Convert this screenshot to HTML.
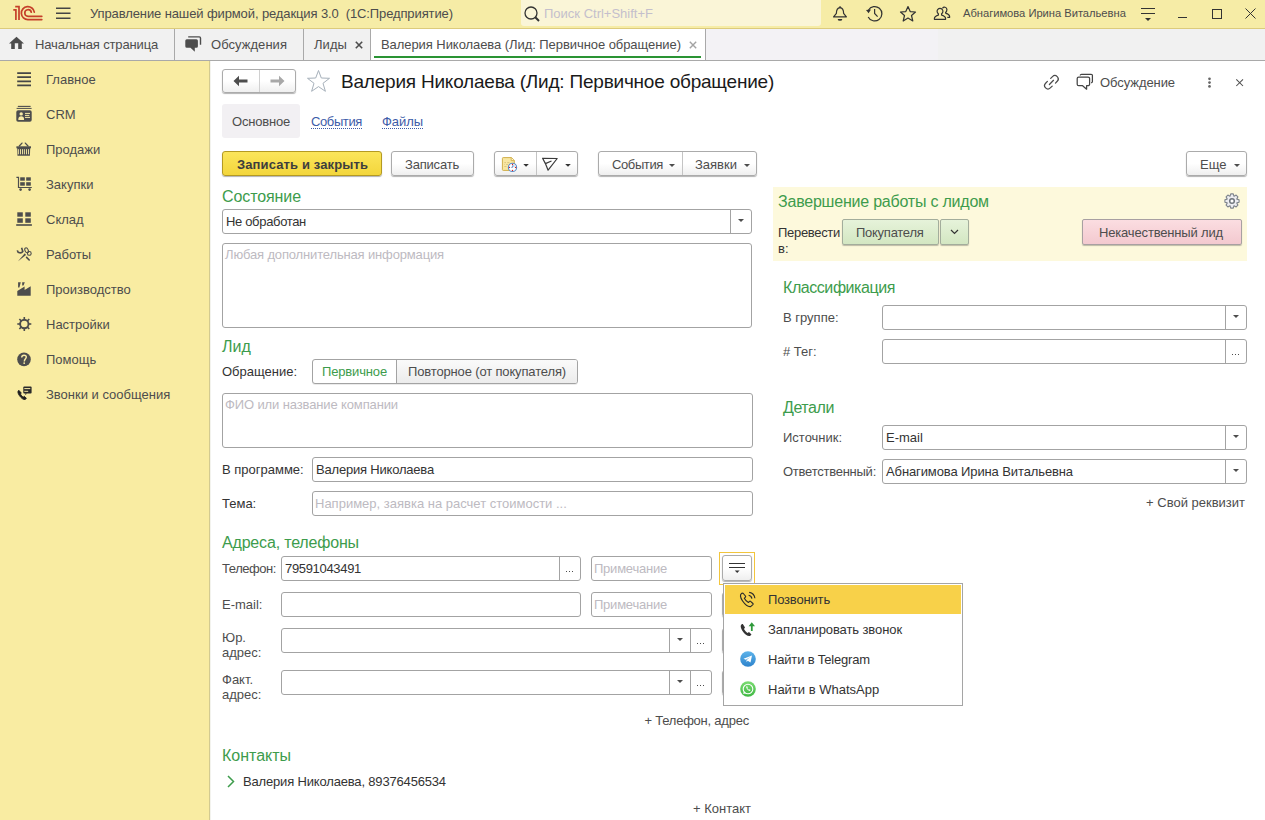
<!DOCTYPE html>
<html><head><meta charset="utf-8">
<style>
*{box-sizing:border-box}
html,body{margin:0;padding:0}
body{width:1265px;height:820px;overflow:hidden;position:relative;background:#fff;font-family:"Liberation Sans",sans-serif;font-size:13px;color:#4d4d4d}
.a{position:absolute}
.t{position:absolute;white-space:nowrap}
svg{position:absolute;overflow:visible}
.btn{position:absolute;border:1px solid #ababab;border-radius:3px;background:linear-gradient(#fff 0%,#fff 50%,#efefef 100%);box-shadow:0 1px 1px rgba(0,0,0,.3)}
.fld{position:absolute;border:1px solid #a3a3a3;border-radius:3px;background:#fff}
.dd{position:absolute;top:0;right:0;bottom:0;width:21px;border-left:1px solid #a3a3a3}
.dd:after{content:"";position:absolute;left:7px;top:50%;margin-top:-3px;border-left:3px solid transparent;border-right:3px solid transparent;border-top:3px solid #4d4d4d}
.el{position:absolute;top:0;right:0;bottom:0;width:21px;border-left:1px solid #a3a3a3}
.el:after{content:"";position:absolute;left:6px;top:50%;margin-top:2px;width:1px;height:1px;background:#4d4d4d;box-shadow:3px 0 #4d4d4d,6px 0 #4d4d4d}
.tri{position:absolute;width:0;height:0;border-left:3px solid transparent;border-right:3px solid transparent;border-top:3px solid #4d4d4d}
</style></head><body>

<div class="a" style="left:0px;top:0px;width:1265px;height:28px;background:#f6eca6;"></div>
<div class="a" style="left:0px;top:28px;width:1265px;height:1px;background:#dccb7c;"></div>
<svg style="left:10px;top:2px;" width="36" height="24" viewBox="0 0 36 24"><g fill="none" stroke="#c5402a" stroke-width="1.7"><path d="M3.3 7.9 H5.9 V17.9 M5.2 4.6 H9 V17.9"/><path d="M24.3 10.2 A6.5 6.5 0 1 0 18 17.6 H31.8" stroke-linecap="round"/><path d="M21.3 10.2 A3.3 3.3 0 1 0 18.1 14.3 H31.8" stroke-linecap="round"/></g></svg>
<svg style="left:56px;top:7px;" width="15" height="13" viewBox="0 0 15 13"><path d="M0 1.3 H14.5 M0 6.3 H14.5 M0 11.3 H14.5" stroke="#444" stroke-width="1.4"/></svg>
<div class="t" style="left:90px;top:4px;font-size:13px;line-height:20px;height:20px;letter-spacing:-0.111px;color:#4d4d4d;">Управление нашей фирмой, редакция 3.0&nbsp; (1С:Предприятие)</div>
<div class="a" style="left:521px;top:0px;width:300px;height:26px;background:#faf5d7;border-radius:0 0 3px 3px"></div>
<svg style="left:523px;top:5px;" width="18" height="18" viewBox="0 0 18 18"><circle cx="8" cy="8" r="6" fill="none" stroke="#333" stroke-width="1.3"/><path d="M12.3 12.3 L16 16" stroke="#333" stroke-width="2"/></svg>
<div class="t" style="left:544px;top:4px;font-size:13px;line-height:20px;height:20px;color:#c4bfcc;">Поиск Ctrl+Shift+F</div>
<svg style="left:0;top:0" width="1265" height="820" viewBox="0 0 1265 820"><path d="M836.4 13.3 C836.4 10.2 836.8 8 840 7.7 C843.2 8 843.6 10.2 843.6 13.3 L846.4 16.9 H833.6 Z" fill="none" stroke="#333" stroke-width="1.2" stroke-linejoin="round"/><rect x="839.4" y="6.2" width="1.3" height="1.6" fill="#333"/><path d="M837.7 18.9 H842.3 A2.3 1.9 0 0 1 837.7 18.9 Z" fill="#333"/></svg>
<svg style="left:0;top:0" width="1265" height="820" viewBox="0 0 1265 820"><path d="M868.4 10.2 A7.2 7.2 0 1 1 868.2 16.9" fill="none" stroke="#333" stroke-width="1.25"/><path d="M866 10.1 L871 9.5 L868.6 13.3 Z" fill="#333"/><path d="M874.6 9.1 V13.4 L877.6 16.6" fill="none" stroke="#333" stroke-width="1.2"/></svg>
<svg style="left:899px;top:5px;" width="18" height="18" viewBox="0 0 18 18"><path d="M9 1.5 L11.2 6.6 L16.5 7 L12.5 10.5 L13.8 16 L9 13.1 L4.2 16 L5.5 10.5 L1.5 7 L6.8 6.6 Z" fill="none" stroke="#333" stroke-width="1.2" stroke-linejoin="round"/></svg>
<svg style="left:0;top:0" width="1265" height="820" viewBox="0 0 1265 820"><path d="M938.4 13.7 A2.9 2.9 0 1 1 941.6 13.7 V15.1 C944 15.9 945.6 16.5 945.6 18.4 V19.3 H934.4 V18.4 C934.4 16.5 936 15.9 938.4 15.1 Z" fill="none" stroke="#333" stroke-width="1.2" stroke-linejoin="round"/><path d="M942.5 8.3 A2.4 2.4 0 0 1 946.9 9.4 C946.9 10.6 946.5 11.6 945.6 12.5 V13.1 C948 13.9 949.6 14.5 949.6 16.3 V17.4 H947.3" fill="none" stroke="#333" stroke-width="1.2" stroke-linejoin="round"/></svg>
<div class="t" style="left:963px;top:3px;font-size:11.2px;line-height:20px;height:20px;letter-spacing:-0.026px;color:#4d4d4d;">Абнагимова Ирина Витальевна</div>
<div class="a" style="left:1141px;top:8px;width:14px;height:1px;background:#333"></div>
<div class="a" style="left:1141px;top:13px;width:14px;height:1px;background:#333"></div>
<div class="tri" style="left:1145px;top:18px;border-left-width:3px;border-right-width:3px;border-top:3px solid #333"></div>
<div class="a" style="left:1178px;top:17px;width:9px;height:1px;background:#333;"></div>
<div class="a" style="left:1212px;top:9px;width:10px;height:10px;border:1px solid #333"></div>
<svg style="left:1245px;top:8px;" width="11" height="11" viewBox="0 0 11 11"><path d="M0.5 0.5 L10.5 10.5 M10.5 0.5 L0.5 10.5" stroke="#333" stroke-width="1"/></svg>
<div class="a" style="left:0px;top:29px;width:1265px;height:31px;background:#f1f1f1;"></div>
<div class="a" style="left:0px;top:60px;width:1265px;height:1px;background:#a9a9a9;"></div>
<div class="a" style="left:705px;top:29px;width:233px;height:31px;background:#f3f2f5;"></div>
<div class="a" style="left:371px;top:29px;width:334px;height:31px;background:#ffffff;"></div>
<div class="a" style="left:174px;top:29px;width:1px;height:31px;background:#a9a9a9;"></div>
<div class="a" style="left:303px;top:29px;width:1px;height:31px;background:#a9a9a9;"></div>
<div class="a" style="left:370px;top:29px;width:1px;height:31px;background:#a9a9a9;"></div>
<div class="a" style="left:705px;top:29px;width:1px;height:31px;background:#a9a9a9;"></div>
<div class="a" style="left:374px;top:56px;width:327px;height:2px;background:#2a9434;"></div>
<svg style="left:0;top:0" width="1265" height="820" viewBox="0 0 1265 820"><path d="M16.5 36.8 L24 43.6 H21.8 V48.9 H18.2 V43.2 H14.8 V48.9 H11.2 V43.6 H9 Z" fill="#4d4d4d"/></svg>
<div class="t" style="left:35px;top:35px;font-size:13px;line-height:20px;height:20px;letter-spacing:-0.155px;color:#4d4d4d;">Начальная страница</div>
<svg style="left:180px;top:30px;" width="28" height="28" viewBox="0 0 28 28"><path d="M8.2 6.9 H19.3 A1.2 1.2 0 0 1 20.5 8.1 V14.8" fill="none" stroke="#4d4d4d" stroke-width="1.4"/><path d="M6.8 9.2 H16.4 A1.5 1.5 0 0 1 17.9 10.7 V16.3 A1.5 1.5 0 0 1 16.4 17.8 H14.8 V21.7 L10.5 17.8 H6.8 A1.5 1.5 0 0 1 5.3 16.3 V10.7 A1.5 1.5 0 0 1 6.8 9.2 Z" fill="#4d4d4d"/></svg>
<div class="t" style="left:211px;top:35px;font-size:13px;line-height:20px;height:20px;letter-spacing:0.044px;color:#4d4d4d;">Обсуждения</div>
<div class="t" style="left:314px;top:35px;font-size:13px;line-height:20px;height:20px;letter-spacing:0.070px;color:#4d4d4d;">Лиды</div>
<svg style="left:355px;top:41px;" width="8" height="8" viewBox="0 0 8 8"><path d="M0.8 0.8 L7.2 7.2 M7.2 0.8 L0.8 7.2" stroke="#4d4d4d" stroke-width="1.6"/></svg>
<div class="t" style="left:381px;top:35px;font-size:13px;line-height:20px;height:20px;letter-spacing:-0.065px;color:#4d4d4d;">Валерия Николаева (Лид: Первичное обращение)</div>
<svg style="left:689px;top:41px;" width="8" height="8" viewBox="0 0 8 8"><path d="M0.8 0.8 L7.2 7.2 M7.2 0.8 L0.8 7.2" stroke="#a3a3a3" stroke-width="1.4"/></svg>
<div class="a" style="left:0px;top:61px;width:210px;height:759px;background:#f9eca2;"></div>
<div class="a" style="left:209px;top:61px;width:1px;height:759px;background:#d3ca90;"></div>
<div class="a" style="left:210px;top:61px;width:1px;height:759px;background:#f3f3ee;"></div>
<div class="t" style="left:46px;top:70px;font-size:13px;line-height:20px;height:20px;color:#4d4d4d;">Главное</div>
<div class="t" style="left:46px;top:105px;font-size:13px;line-height:20px;height:20px;color:#4d4d4d;">CRM</div>
<div class="t" style="left:46px;top:140px;font-size:13px;line-height:20px;height:20px;color:#4d4d4d;">Продажи</div>
<div class="t" style="left:46px;top:175px;font-size:13px;line-height:20px;height:20px;color:#4d4d4d;">Закупки</div>
<div class="t" style="left:46px;top:210px;font-size:13px;line-height:20px;height:20px;color:#4d4d4d;">Склад</div>
<div class="t" style="left:46px;top:245px;font-size:13px;line-height:20px;height:20px;color:#4d4d4d;">Работы</div>
<div class="t" style="left:46px;top:280px;font-size:13px;line-height:20px;height:20px;color:#4d4d4d;">Производство</div>
<div class="t" style="left:46px;top:315px;font-size:13px;line-height:20px;height:20px;color:#4d4d4d;">Настройки</div>
<div class="t" style="left:46px;top:350px;font-size:13px;line-height:20px;height:20px;color:#4d4d4d;">Помощь</div>
<div class="t" style="left:46px;top:385px;font-size:13px;line-height:20px;height:20px;color:#4d4d4d;">Звонки и сообщения</div>
<svg style="left:0;top:0" width="1265" height="820" viewBox="0 0 1265 820"><path d="M17.2 73.1 H31 M17.2 77.2 H31 M17.2 81.3 H31 M17.2 85.4 H31" stroke="#464646" stroke-width="1.7"/><path d="M17.8 106.4 H30.6" stroke="#4d4d4d" stroke-width="1.1"/><path d="M16.6 108.4 H31.6" stroke="#4d4d4d" stroke-width="1"/><rect x="16.3" y="110.2" width="15.4" height="11.6" rx="1.8" fill="#4d4d4d"/><circle cx="21.2" cy="113.9" r="1.7" fill="#f9eca6"/><path d="M18.3 119.9 C18.3 117 19.5 116.3 21.2 116.3 C22.9 116.3 24.1 117 24.1 119.9 Z" fill="#f9eca6"/><path d="M25 113.4 H30 M25 115.4 H29.3 M25 117.4 H30" stroke="#f9eca6" stroke-width="1"/><path d="M19.3 146 L22 143.1 M25.3 143.1 L28 146" stroke="#4d4d4d" stroke-width="1.3" stroke-linecap="round"/><rect x="16.4" y="146.3" width="14.6" height="2" fill="#4d4d4d"/><path d="M17.2 148 H30.2 L29.9 155.7 H17.5 Z" fill="#4d4d4d"/><path d="M18.4 149.2 V154.3 M20.5 149.2 V154.3 M22.5 149.2 V154.3 M24.4 149.2 V154.3 M26.5 149.2 V154.3 M28.5 149.2 V154.3" stroke="#f9eca6" stroke-width="0.9"/><path d="M16.4 177.3 H18.5 V187.5 H31.8" fill="none" stroke="#4d4d4d" stroke-width="1.2"/><rect x="20.2" y="177.3" width="4.6" height="3.4" fill="#4d4d4d"/><rect x="26.2" y="177.3" width="4.6" height="3.4" fill="#4d4d4d"/><rect x="20.2" y="182.2" width="4.6" height="3.5" fill="#4d4d4d"/><rect x="26.2" y="182.2" width="4.6" height="3.5" fill="#4d4d4d"/><circle cx="20.6" cy="189.6" r="1.3" fill="#4d4d4d"/><circle cx="29.6" cy="189.6" r="1.3" fill="#4d4d4d"/><rect x="17.3" y="212.3" width="5.5" height="4.4" fill="#4d4d4d"/><rect x="25.3" y="212.3" width="5.5" height="4.4" fill="#4d4d4d"/><rect x="17.3" y="218.3" width="5.5" height="4.5" fill="#4d4d4d"/><rect x="25.3" y="218.3" width="5.5" height="4.5" fill="#4d4d4d"/><rect x="16.2" y="224.2" width="15.7" height="1.6" fill="#4d4d4d"/><path d="M17.3 250.3 A3 3 0 0 0 22.8 251.5 L21.6 247.8" fill="none" stroke="#4d4d4d" stroke-width="1.6"/><path d="M18 261.3 L24.8 253.3 L26 255 Z" fill="#4d4d4d"/><ellipse cx="26.6" cy="250.3" rx="1.6" ry="2.6" fill="none" stroke="#4d4d4d" stroke-width="1.1" transform="rotate(-25 26.6 250.3)"/><circle cx="29.3" cy="253.4" r="1.9" fill="none" stroke="#4d4d4d" stroke-width="1.1"/><path d="M26.6 257.4 L29.2 260" stroke="#4d4d4d" stroke-width="1.6" stroke-linecap="round"/><path d="M17.3 295.7 V291.1 L24.6 286.6 V290 L30.7 286.2 V295.7 Z" fill="#4d4d4d"/><path d="M18.1 282.3 H20.8 L19.4 287.5 H18.1 Z M22.2 282.3 H24.8 L23.5 285.5 H22.2 Z" fill="#4d4d4d"/><g transform="translate(24.3 324)"><circle r="4.2" fill="none" stroke="#4d4d4d" stroke-width="1.9"/><rect x="-0.8" y="-7" width="1.6" height="3.2" fill="#4d4d4d" transform="rotate(0)"/><rect x="-0.8" y="-7" width="1.6" height="3.2" fill="#4d4d4d" transform="rotate(45)"/><rect x="-0.8" y="-7" width="1.6" height="3.2" fill="#4d4d4d" transform="rotate(90)"/><rect x="-0.8" y="-7" width="1.6" height="3.2" fill="#4d4d4d" transform="rotate(135)"/><rect x="-0.8" y="-7" width="1.6" height="3.2" fill="#4d4d4d" transform="rotate(180)"/><rect x="-0.8" y="-7" width="1.6" height="3.2" fill="#4d4d4d" transform="rotate(225)"/><rect x="-0.8" y="-7" width="1.6" height="3.2" fill="#4d4d4d" transform="rotate(270)"/><rect x="-0.8" y="-7" width="1.6" height="3.2" fill="#4d4d4d" transform="rotate(315)"/></g><circle cx="24" cy="359.4" r="6.8" fill="#4d4d4d"/><path d="M21.7 357.4 C21.7 355.9 22.6 355.2 24 355.2 C25.5 355.2 26.3 356.1 26.3 357.1 C26.3 358.6 24.3 359 24.3 361.4" fill="none" stroke="#f9eca6" stroke-width="1.4"/><rect x="23.4" y="362.4" width="1.6" height="1.5" fill="#f9eca6"/><path d="M18.8 390.3 C17.5 391 17.6 393 19.4 395.6 C21.2 398.2 23.3 399.8 25 399.5 L26.4 398.4 L24.4 396.3 L23.3 397.1 C22.4 396.6 20.9 395 20.4 394 L21.3 393 Z" fill="#1f1f1f" stroke="#1f1f1f" stroke-width="0.9" stroke-linejoin="round"/><rect x="23.3" y="386.6" width="8.3" height="6.9" rx="1" fill="#2a2a2a"/><path d="M25 393.4 L25.5 395 L27 393.4 Z" fill="#2a2a2a"/><path d="M24.3 388.6 H30.3 M24.3 391.3 H28.2" stroke="#f9eca6" stroke-width="1"/></svg>
<div class="btn" style="left:222px;top:69px;width:74px;height:24px"></div>
<div class="a" style="left:259px;top:70px;width:1px;height:22px;background:#d0d0d0;"></div>
<svg style="left:233px;top:75px;" width="16" height="12" viewBox="0 0 16 12"><path d="M0.5 6 L6 0.8 V4.5 H14.5 V7.5 H6 V11.2 Z" fill="#4d4d4d"/></svg>
<svg style="left:269px;top:75px;" width="16" height="12" viewBox="0 0 16 12"><path d="M15.5 6 L10 0.8 V4.5 H1.5 V7.5 H10 V11.2 Z" fill="#a8a8a8"/></svg>
<svg style="left:306px;top:69px;" width="25" height="24" viewBox="0 0 25 24"><path d="M12.5 1.5 L15.3 9 L23.5 9.3 L17 14.3 L19.4 22.3 L12.5 17.6 L5.6 22.3 L8 14.3 L1.5 9.3 L9.7 9 Z" fill="none" stroke="#a6b0ba" stroke-width="1"/></svg>
<div class="t" style="left:341px;top:72px;font-size:19px;line-height:20px;height:20px;letter-spacing:-0.215px;color:#1a1a1a;">Валерия Николаева (Лид: Первичное обращение)</div>
<svg style="left:0;top:0" width="1265" height="820" viewBox="0 0 1265 820"><path d="M1050.7 78.4 L1052.5 76.6 A3.32 3.32 0 0 1 1057.2 81.3 L1055.5 83.1 M1047.4 81.4 L1045.6 83.2 A3.32 3.32 0 0 0 1050.3 87.9 L1052.2 86.1 M1049.4 84.5 L1053.5 80.3" fill="none" stroke="#4a4a4a" stroke-width="1.25" stroke-linecap="round"/></svg>
<svg style="left:0;top:0" width="1265" height="820" viewBox="0 0 1265 820"><path d="M1078.7 77.1 H1088.1 A1.5 1.5 0 0 1 1089.6 78.6 V84.2 A1.5 1.5 0 0 1 1088.1 85.7 H1086.6 V89.2 L1082.6 85.7 H1078.7 A1.5 1.5 0 0 1 1077.2 84.2 V78.6 A1.5 1.5 0 0 1 1078.7 77.1 Z M1080.3 75.6 A1.3 1.3 0 0 1 1081.6 74.3 H1091.1 A1.3 1.3 0 0 1 1092.4 75.6 V81.4 A1.3 1.3 0 0 1 1091.1 82.7" fill="none" stroke="#444" stroke-width="1.25" stroke-linejoin="round"/></svg>
<div class="t" style="left:1100px;top:73px;font-size:13px;line-height:20px;height:20px;letter-spacing:-0.075px;color:#4d4d4d;">Обсуждение</div>
<svg style="left:0;top:0" width="1265" height="820" viewBox="0 0 1265 820"><circle cx="1209.5" cy="78.8" r="1.35" fill="#666"/><circle cx="1209.5" cy="82.6" r="1.35" fill="#666"/><circle cx="1209.5" cy="86.4" r="1.35" fill="#666"/></svg>
<svg style="left:0;top:0" width="1265" height="820" viewBox="0 0 1265 820"><path d="M1236.3 79.3 L1243 86 M1243 79.3 L1236.3 86" stroke="#4d4d4d" stroke-width="1.05"/></svg>
<div class="a" style="left:222px;top:104px;width:78px;height:34px;background:#f2f0f3;border-radius:3px"></div>
<div class="t" style="left:232px;top:112px;font-size:13px;line-height:20px;height:20px;letter-spacing:-0.195px;color:#4d4d4d;">Основное</div>
<div class="t" style="left:311px;top:112px;font-size:13px;line-height:20px;height:20px;letter-spacing:-0.384px;color:#3c5ba8;">События</div>
<div class="a" style="left:311px;top:128px;width:51px;height:0;border-top:1px dotted #3c5ba8"></div>
<div class="t" style="left:382px;top:112px;font-size:13px;line-height:20px;height:20px;letter-spacing:-0.062px;color:#3c5ba8;">Файлы</div>
<div class="a" style="left:382px;top:128px;width:41px;height:0;border-top:1px dotted #3c5ba8"></div>
<div class="a" style="left:222px;top:151px;width:160px;height:25px;border:1px solid #b49a22;border-radius:3px;background:linear-gradient(#fbe55a,#f3d63c);box-shadow:0 1px 1px rgba(0,0,0,.3)"></div>
<div class="t" style="left:237px;top:155px;font-size:13px;line-height:20px;height:20px;letter-spacing:0.122px;color:#3d3d3d;font-weight:bold;">Записать и закрыть</div>
<div class="btn" style="left:391px;top:151px;width:83px;height:25px"></div>
<div class="t" style="left:405px;top:155px;font-size:13px;line-height:20px;height:20px;letter-spacing:-0.197px;color:#4d4d4d;">Записать</div>
<div class="btn" style="left:494px;top:151px;width:84px;height:25px"></div>
<div class="a" style="left:536px;top:152px;width:1px;height:23px;background:#c4c4c4;"></div>
<svg style="left:498px;top:153px;" width="36" height="24" viewBox="0 0 36 24"><path d="M5.2 4.6 H13.6 L16.3 7.4 V16.6 A0.8 0.8 0 0 1 15.5 17.4 H5.2 A0.8 0.8 0 0 1 4.4 16.6 V5.4 A0.8 0.8 0 0 1 5.2 4.6 Z" fill="#f8e7a2" stroke="#d1af4c" stroke-width="1"/><path d="M13.2 4.8 V7.6 H16.2" fill="#fff6cf" stroke="#d1af4c" stroke-width="0.9"/><path d="M6.3 9.6 H8 M9.2 9.6 H11.5 M6.3 11.5 H6.9 M8.2 11.5 H10 M6.3 13.5 H8.5" stroke="#d9c27a" stroke-width="0.9"/><circle cx="14.5" cy="14.4" r="4.1" fill="#fff" stroke="#5a8ac6" stroke-width="1.1"/><path d="M14.5 11.6 A2.8 2.8 0 0 1 17.1 13.2 L14.5 14.4 Z" fill="#b8cdea"/><path d="M14.5 12.5 V14.4 H13.2" fill="none" stroke="#5a8ac6" stroke-width="0.8"/><circle cx="14.5" cy="11.5" r="0.65" fill="#e0201a"/><circle cx="17.5" cy="14.4" r="0.65" fill="#e0201a"/><circle cx="14.5" cy="17.4" r="0.65" fill="#e0201a"/><circle cx="11.5" cy="14.4" r="0.65" fill="#e0201a"/></svg>
<svg style="left:0;top:0" width="1265" height="820" viewBox="0 0 1265 820"><path d="M523.3 164 H528.8 L526.05 166.8 Z" fill="#333"/><path d="M565.2 164 H570.8 L568 166.8 Z" fill="#333"/></svg>
<svg style="left:536px;top:153px;" width="42" height="24" viewBox="0 0 42 24"><path d="M6.6 5.3 L21.2 5.5 L12.1 17.2 L9.4 10.6 Z M9.4 10.6 L15.5 8" fill="none" stroke="#3a3a3a" stroke-width="1.2" stroke-linejoin="round"/></svg>
<div class="btn" style="left:598px;top:151px;width:159px;height:25px"></div>
<div class="a" style="left:682px;top:152px;width:1px;height:23px;background:#c4c4c4;"></div>
<div class="t" style="left:612px;top:155px;font-size:13px;line-height:20px;height:20px;letter-spacing:-0.384px;color:#4d4d4d;">События</div>
<div class="tri" style="left:669px;top:164px"></div>
<div class="t" style="left:695px;top:155px;font-size:13px;line-height:20px;height:20px;letter-spacing:0.000px;color:#4d4d4d;">Заявки</div>
<div class="tri" style="left:744px;top:164px"></div>
<div class="btn" style="left:1186px;top:151px;width:61px;height:25px"></div>
<div class="t" style="left:1200px;top:155px;font-size:13px;line-height:20px;height:20px;color:#4d4d4d;">Еще</div>
<div class="tri" style="left:1234px;top:164px"></div>
<div class="t" style="left:222px;top:187px;font-size:16px;line-height:20px;height:20px;letter-spacing:-0.099px;color:#3d9c4c;">Состояние</div>
<div class="fld" style="left:222px;top:209px;width:530px;height:25px"><div class="dd"></div></div>
<div class="t" style="left:226px;top:212px;font-size:13px;line-height:20px;height:20px;letter-spacing:-0.335px;color:#333;">Не обработан</div>
<div class="fld" style="left:222px;top:243px;width:530px;height:85px"></div>
<div class="t" style="left:225px;top:245px;font-size:13px;line-height:20px;height:20px;letter-spacing:-0.152px;color:#bdbac1;">Любая дополнительная информация</div>
<div class="t" style="left:222px;top:337px;font-size:16px;line-height:20px;height:20px;color:#3d9c4c;">Лид</div>
<div class="t" style="left:222px;top:362px;font-size:13px;line-height:20px;height:20px;color:#333;">Обращение:</div>
<div class="a" style="left:312px;top:359px;width:266px;height:25px;border:1px solid #a3a3a3;border-radius:3px;background:#fff;overflow:hidden;box-shadow:0 1px 0 rgba(0,0,0,.08)"><div class="a" style="left:83px;top:0;width:183px;height:23px;border-left:1px solid #a3a3a3;background:linear-gradient(#fafafa,#ececec)"></div></div>
<div class="t" style="left:322px;top:362px;font-size:13px;line-height:20px;height:20px;letter-spacing:-0.155px;color:#3d9c4c;">Первичное</div>
<div class="t" style="left:408px;top:362px;font-size:13px;line-height:20px;height:20px;letter-spacing:-0.150px;color:#4d4d4d;">Повторное (от покупателя)</div>
<div class="fld" style="left:222px;top:393px;width:531px;height:55px"></div>
<div class="t" style="left:225px;top:395px;font-size:13px;line-height:20px;height:20px;letter-spacing:-0.126px;color:#bdbac1;">ФИО или название компании</div>
<div class="t" style="left:222px;top:460px;font-size:13px;line-height:20px;height:20px;color:#333;">В программе:</div>
<div class="fld" style="left:312px;top:457px;width:441px;height:25px"></div>
<div class="t" style="left:316px;top:460px;font-size:13px;line-height:20px;height:20px;letter-spacing:-0.198px;color:#333;">Валерия Николаева</div>
<div class="t" style="left:222px;top:494px;font-size:13px;line-height:20px;height:20px;color:#333;">Тема:</div>
<div class="fld" style="left:312px;top:491px;width:441px;height:25px"></div>
<div class="t" style="left:315px;top:494px;font-size:13px;line-height:20px;height:20px;color:#bdbac1;">Например, заявка на расчет стоимости ...</div>
<div class="t" style="left:222px;top:533px;font-size:16px;line-height:20px;height:20px;letter-spacing:-0.178px;color:#3d9c4c;">Адреса, телефоны</div>
<div class="t" style="left:222px;top:559px;font-size:13px;line-height:20px;height:20px;letter-spacing:-0.441px;color:#4d4d4d;">Телефон:</div>
<div class="fld" style="left:281px;top:556px;width:300px;height:25px"><div class="el"></div></div>
<div class="t" style="left:285px;top:559px;font-size:13px;line-height:20px;height:20px;letter-spacing:-0.325px;color:#333;">79591043491</div>
<div class="fld" style="left:591px;top:556px;width:121px;height:25px"></div>
<div class="t" style="left:594px;top:559px;font-size:13px;line-height:20px;height:20px;letter-spacing:-0.225px;color:#bdbac1;">Примечание</div>
<div class="a" style="left:719px;top:552px;width:36px;height:33px;border:1px solid #f2c53d"></div>
<div class="btn" style="left:722px;top:555px;width:30px;height:26px"></div>
<div class="a" style="left:729px;top:563px;width:16px;height:1px;background:#333;"></div>
<div class="a" style="left:729px;top:567px;width:16px;height:1px;background:#333;"></div>
<svg style="left:0;top:0" width="1265" height="820" viewBox="0 0 1265 820"><path d="M734.8 570.4 H739.6 L737.2 572.9 Z" fill="#333"/></svg>
<div class="t" style="left:222px;top:595px;font-size:13px;line-height:20px;height:20px;color:#4d4d4d;">E-mail:</div>
<div class="fld" style="left:281px;top:592px;width:300px;height:25px"></div>
<div class="fld" style="left:591px;top:592px;width:121px;height:25px"></div>
<div class="t" style="left:594px;top:595px;font-size:13px;line-height:20px;height:20px;letter-spacing:-0.225px;color:#bdbac1;">Примечание</div>
<div class="btn" style="left:722px;top:592px;width:30px;height:25px"></div>
<div class="t" style="left:222px;top:628px;font-size:13px;line-height:20px;height:20px;color:#4d4d4d;">Юр.</div>
<div class="t" style="left:222px;top:643px;font-size:13px;line-height:20px;height:20px;color:#4d4d4d;">адрес:</div>
<div class="fld" style="left:281px;top:628px;width:431px;height:25px"><div class="el"></div><div class="dd" style="right:21px"></div></div>
<div class="btn" style="left:722px;top:628px;width:30px;height:25px"></div>
<div class="t" style="left:222px;top:670px;font-size:13px;line-height:20px;height:20px;color:#4d4d4d;">Факт.</div>
<div class="t" style="left:222px;top:685px;font-size:13px;line-height:20px;height:20px;color:#4d4d4d;">адрес:</div>
<div class="fld" style="left:281px;top:670px;width:431px;height:25px"><div class="el"></div><div class="dd" style="right:21px"></div></div>
<div class="btn" style="left:722px;top:670px;width:30px;height:25px"></div>
<div class="t" style="right:516px;top:711px;font-size:13px;line-height:20px;height:20px;letter-spacing:-0.227px;color:#4d4d4d;">+ Телефон, адрес</div>
<div class="t" style="left:222px;top:746px;font-size:16px;line-height:20px;height:20px;color:#3d9c4c;">Контакты</div>
<svg style="left:227px;top:775px;" width="8" height="13" viewBox="0 0 8 13"><path d="M1 1 L6.5 6.5 L1 12" fill="none" stroke="#3d9c4c" stroke-width="1.5"/></svg>
<div class="t" style="left:243px;top:772px;font-size:13px;line-height:20px;height:20px;letter-spacing:-0.172px;color:#333;">Валерия Николаева, 89376456534</div>
<div class="t" style="right:514px;top:799px;font-size:13px;line-height:20px;height:20px;color:#4d4d4d;">+ Контакт</div>
<div class="a" style="left:773px;top:187px;width:474px;height:74px;background:#fdf9dc;"></div>
<div class="t" style="left:778px;top:192px;font-size:16px;line-height:20px;height:20px;letter-spacing:-0.217px;color:#3d9c4c;">Завершение работы с лидом</div>
<svg style="left:1224px;top:193px;" width="16" height="16" viewBox="0 0 16 16"><path d="M6.10 3.16 L6.73 0.91 L9.27 0.91 L9.90 3.16 L10.08 3.24 L12.12 2.09 L13.91 3.88 L12.76 5.92 L12.84 6.10 L15.09 6.73 L15.09 9.27 L12.84 9.90 L12.76 10.08 L13.91 12.12 L12.12 13.91 L10.08 12.76 L9.90 12.84 L9.27 15.09 L6.73 15.09 L6.10 12.84 L5.92 12.76 L3.88 13.91 L2.09 12.12 L3.24 10.08 L3.16 9.90 L0.91 9.27 L0.91 6.73 L3.16 6.10 L3.24 5.92 L2.09 3.88 L3.88 2.09 L5.92 3.24 Z" fill="#ececf0" stroke="#7d838b" stroke-width="1.1" stroke-linejoin="round"/><circle cx="8" cy="8" r="2.3" fill="#fff" stroke="#6f757d" stroke-width="1.5"/></svg>
<div class="t" style="left:778px;top:223px;font-size:13px;line-height:20px;height:20px;letter-spacing:-0.307px;color:#333;">Перевести</div>
<div class="t" style="left:778px;top:239px;font-size:13px;line-height:20px;height:20px;color:#333;">в:</div>
<div class="a" style="left:842px;top:219px;width:97px;height:26px;border:1px solid #a3ad9c;border-radius:2px;background:linear-gradient(#e6f3da,#d3e7c2);box-shadow:0 1px 1px rgba(0,0,0,.25)"></div>
<div class="t" style="left:856px;top:223px;font-size:13px;line-height:20px;height:20px;letter-spacing:-0.264px;color:#4d4d4d;">Покупателя</div>
<div class="a" style="left:940px;top:219px;width:29px;height:26px;border:1px solid #a3ad9c;border-radius:2px;background:linear-gradient(#e6f3da,#d3e7c2);box-shadow:0 1px 1px rgba(0,0,0,.25)"></div>
<svg style="left:950px;top:229px;" width="9" height="6" viewBox="0 0 9 6"><path d="M1 1 L4.5 4.5 L8 1" fill="none" stroke="#333" stroke-width="1.2"/></svg>
<div class="a" style="left:1082px;top:219px;width:160px;height:26px;border:1px solid #a8a0a2;border-radius:2px;background:linear-gradient(#fbdde1,#f3c9cf);box-shadow:0 1px 1px rgba(0,0,0,.25)"></div>
<div class="t" style="left:1099px;top:223px;font-size:13px;line-height:20px;height:20px;letter-spacing:-0.166px;color:#4d4d4d;">Некачественный лид</div>
<div class="t" style="left:783px;top:278px;font-size:16px;line-height:20px;height:20px;letter-spacing:-0.436px;color:#3d9c4c;">Классификация</div>
<div class="t" style="left:783px;top:308px;font-size:13px;line-height:20px;height:20px;color:#4d4d4d;">В группе:</div>
<div class="fld" style="left:882px;top:305px;width:365px;height:25px"><div class="dd"></div></div>
<div class="t" style="left:783px;top:342px;font-size:13px;line-height:20px;height:20px;color:#4d4d4d;"># Тег:</div>
<div class="fld" style="left:882px;top:339px;width:365px;height:25px"><div class="el"></div></div>
<div class="t" style="left:783px;top:398px;font-size:16px;line-height:20px;height:20px;letter-spacing:-0.427px;color:#3d9c4c;">Детали</div>
<div class="t" style="left:783px;top:428px;font-size:13px;line-height:20px;height:20px;color:#4d4d4d;">Источник:</div>
<div class="fld" style="left:882px;top:425px;width:365px;height:25px"><div class="dd"></div></div>
<div class="t" style="left:886px;top:428px;font-size:13px;line-height:20px;height:20px;color:#333;">E-mail</div>
<div class="t" style="left:783px;top:462px;font-size:13px;line-height:20px;height:20px;letter-spacing:-0.247px;color:#4d4d4d;">Ответственный:</div>
<div class="fld" style="left:882px;top:459px;width:365px;height:25px"><div class="dd"></div></div>
<div class="t" style="left:886px;top:462px;font-size:13px;line-height:20px;height:20px;letter-spacing:-0.113px;color:#333;">Абнагимова Ирина Витальевна</div>
<div class="t" style="right:20px;top:493px;font-size:13px;line-height:20px;height:20px;color:#4d4d4d;">+ Свой реквизит</div>
<div class="a" style="left:723px;top:583px;width:240px;height:123px;border:1px solid #a5a5a5;background:#fff"></div>
<div class="a" style="left:725px;top:585px;width:236px;height:29px;background:#f8d149;"></div>
<div class="t" style="left:768px;top:590px;font-size:13px;line-height:20px;height:20px;letter-spacing:-0.172px;color:#333;">Позвонить</div>
<div class="t" style="left:768px;top:620px;font-size:13px;line-height:20px;height:20px;letter-spacing:-0.098px;color:#333;">Запланировать звонок</div>
<div class="t" style="left:768px;top:650px;font-size:13px;line-height:20px;height:20px;letter-spacing:-0.170px;color:#333;">Найти в Telegram</div>
<div class="t" style="left:768px;top:680px;font-size:13px;line-height:20px;height:20px;color:#333;">Найти в WhatsApp</div>
<svg style="left:739px;top:591px;" width="18" height="18" viewBox="0 0 18 18"><path d="M2.6 2.4 C1 3.4 0.9 6 3.6 10 C6.1 13.6 9.1 16 11.6 15.6 L13.9 13.6 C14.2 13.3 14.2 12.8 13.9 12.5 L11.6 10.4 C11.3 10.1 10.8 10.1 10.5 10.4 L9.4 11.5 C8.1 10.8 6.1 8.8 5.3 7.3 L6.4 6.1 C6.7 5.8 6.7 5.3 6.4 5 L4.3 2.5 C4 2.2 3.5 2.1 3.2 2.2 Z" fill="none" stroke="#2b2b2b" stroke-width="1.15" stroke-linejoin="round"/><path d="M9.6 4.3 A4 4 0 0 1 12.9 7.6 M10.2 1.4 A6.8 6.8 0 0 1 15.9 7.3" fill="none" stroke="#2b2b2b" stroke-width="1.15"/></svg>
<svg style="left:739px;top:621px;" width="17" height="16" viewBox="0 0 17 16"><path d="M3 3 C1.5 4 1 6 3.5 10 C6 14 9 15.5 11 15 L12.5 13.5 L10 11 L8.5 12 C7.5 11.5 5.5 9 5 8 L6 6.5 L3.8 3 Z" fill="#333"/><path d="M12.8 10 V4.5" stroke="#2f9a3b" stroke-width="1.8"/><path d="M9.6 5.3 L12.8 1.3 L16 5.3 Z" fill="#2f9a3b"/></svg>
<svg style="left:740px;top:651px;" width="16" height="16" viewBox="0 0 16 16"><defs><linearGradient id="tg" x1="0" y1="0" x2="0" y2="1"><stop offset="0" stop-color="#5db3ea"/><stop offset="1" stop-color="#2d83cc"/></linearGradient></defs><circle cx="8" cy="8" r="7.8" fill="url(#tg)"/><path d="M3.5 7.8 L12 4.5 L10.5 11.5 L7.8 9.8 L6.5 11 L6.6 9 L10.3 6 L5.8 8.7 Z" fill="#fff"/></svg>
<svg style="left:740px;top:681px;" width="16" height="16" viewBox="0 0 16 16"><defs><linearGradient id="wa" x1="0" y1="0" x2="0" y2="1"><stop offset="0" stop-color="#7bdc72"/><stop offset="1" stop-color="#3fb843"/></linearGradient></defs><circle cx="8" cy="8" r="7.8" fill="url(#wa)"/><circle cx="8" cy="8" r="4.8" fill="none" stroke="#fff" stroke-width="1.1"/><path d="M3.2 13 L3.8 10.3 L5.8 12.3 Z" fill="#fff"/><path d="M6.2 5.6 C5.8 6.8 7.4 9.4 9.8 10 L10.6 9 L9.6 8.3 L9 8.8 C8.2 8.4 7.6 7.8 7.3 7 L7.8 6.4 L7.2 5.3 Z" fill="#fff"/></svg>
</body></html>
